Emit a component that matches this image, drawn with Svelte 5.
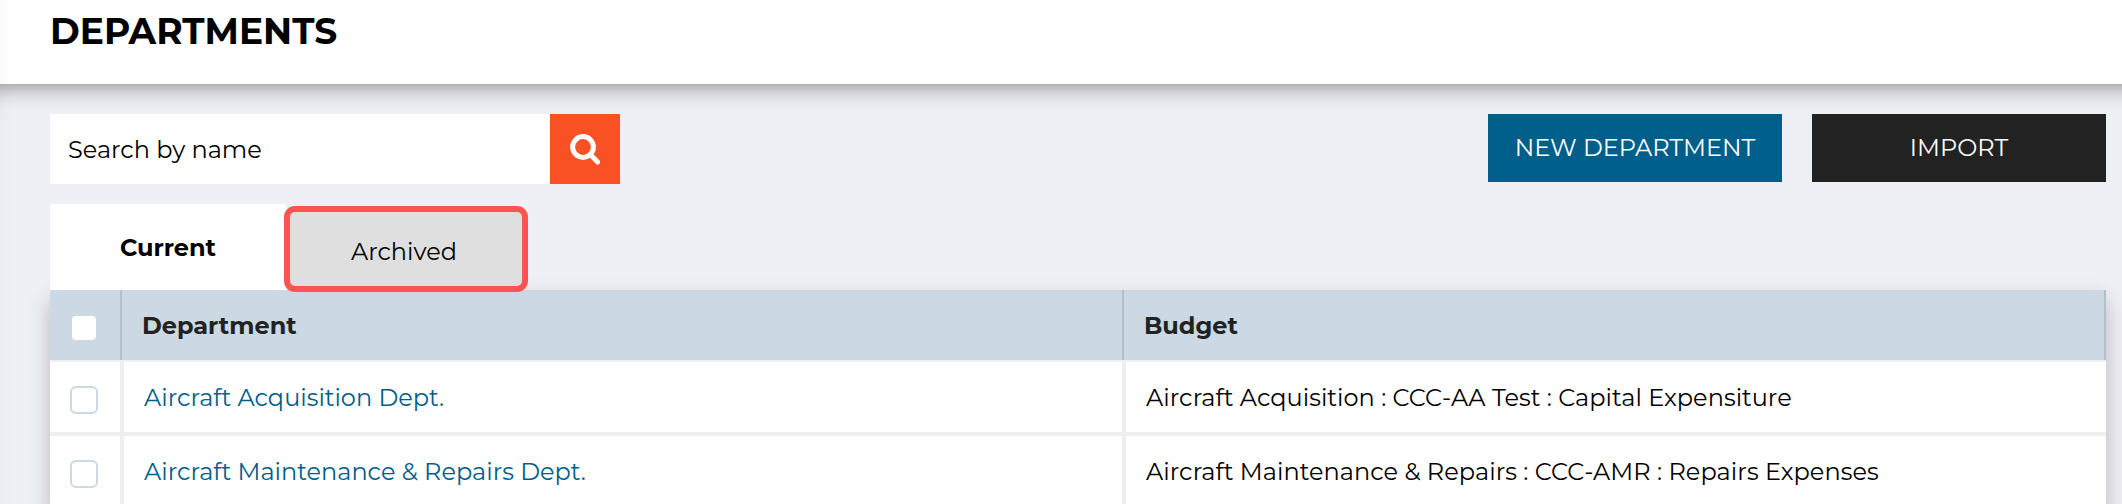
<script lang="ts">
	interface Department {
		name: string;
		budget: string;
	}

	const departments: Department[] = [
		{
			name: 'Aircraft Acquisition Dept.',
			budget: 'Aircraft Acquisition : CCC-AA Test : Capital Expensiture'
		},
		{
			name: 'Aircraft Maintenance & Repairs Dept.',
			budget: 'Aircraft Maintenance & Repairs : CCC-AMR : Repairs Expenses'
		}
	];

	let search = $state('');
	let tab = $state('current');
	let selected = $state(departments.map(() => false));
	let allSelected = $derived(selected.every(Boolean));

	function toggleAll() {
		const next = !allSelected;
		selected = selected.map(() => next);
	}
</script>

<div class="page">
	<header>
		<h1>DEPARTMENTS</h1>
	</header>

	<main>
		<div class="toolbar">
			<form class="search" onsubmit={(e) => e.preventDefault()}>
				<input type="text" placeholder="Search by name" bind:value={search} />
				<button type="submit" aria-label="Search">
					<svg viewBox="0 0 30 31" width="30" height="31">
						<circle cx="13" cy="13" r="10.4" />
						<path d="M20.5 20.8 L27.6 28" />
					</svg>
				</button>
			</form>
			<div class="actions">
				<button type="button" class="btn btn-new">NEW DEPARTMENT</button>
				<button type="button" class="btn btn-import">IMPORT</button>
			</div>
		</div>

		<div class="tabs">
			<button type="button" class="tab" class:active={tab === 'current'} onclick={() => (tab = 'current')}>
				Current
			</button>
			<button type="button" class="tab archived" class:active={tab === 'archived'} onclick={() => (tab = 'archived')}>
				Archived
			</button>
		</div>

		<div class="table">
			<div class="row head">
				<div class="cell check">
					<input type="checkbox" aria-label="Select all" checked={allSelected} onchange={toggleAll} />
				</div>
				<div class="cell">Department</div>
				<div class="cell">Budget</div>
			</div>
			{#each departments as department, i (department.name)}
				<div class="row">
					<div class="cell check">
						<input type="checkbox" aria-label="Select {department.name}" bind:checked={selected[i]} />
					</div>
					<div class="cell"><a href="#department-{i}">{department.name}</a></div>
					<div class="cell budget">{department.budget}</div>
				</div>
			{/each}
		</div>
	</main>
</div>

<style>
	:global(body) {
		overflow: hidden;
	}

	.page {
		position: relative;
		height: 504px;
		overflow: hidden;
		background: #eff0f6;
		color: #000;
		font-family: Montserrat, 'Open Sans', sans-serif;
		font-size: 24px;
		line-height: 30px;
	}

	/* faint shade cast by the side menu */
	.page::before {
		content: '';
		position: absolute;
		top: -20px;
		bottom: -20px;
		left: -10px;
		width: 10px;
		box-shadow: 0 0 14px rgba(40, 20, 20, 0.05);
		z-index: 1;
	}

	header {
		height: 84px;
		box-sizing: border-box;
		margin: 0 -30px;
		padding: 9px 80px 0;
		background: #fff;
		box-shadow: 0 0 24px rgba(0, 0, 0, 0.5);
	}

	h1 {
		margin: 0;
		font-size: 36px;
		font-weight: 700;
		line-height: 44px;
	}

	main {
		padding: 30px 16px 0 50px;
	}

	button,
	input {
		font: inherit;
		border: none;
		border-radius: 0;
		margin: 0;
		padding: 0;
	}

	.toolbar {
		display: flex;
		justify-content: space-between;
		align-items: flex-start;
	}

	.search {
		display: flex;
		height: 70px;
	}

	.search input {
		width: 500px;
		box-sizing: border-box;
		padding: 2px 18px 0;
		background: #fff;
		outline: none;
	}

	.search input::placeholder {
		color: #000;
		opacity: 1;
	}

	.search button {
		display: flex;
		align-items: center;
		justify-content: center;
		width: 70px;
		background: #f95123;
	}

	.search svg {
		fill: none;
		stroke: #fff;
		stroke-width: 5;
		stroke-linecap: round;
	}

	.actions {
		display: flex;
		gap: 30px;
	}

	.btn {
		width: 294px;
		height: 68px;
		color: #fff;
	}

	.btn-new {
		background: #005e8a;
	}

	.btn-import {
		background: #222;
	}

	.tabs {
		display: flex;
		position: relative;
		z-index: 1;
		height: 86px;
		margin-top: 20px;
	}

	.tab {
		width: 236px;
		padding-top: 2px;
		background: #dfdfdf;
		color: #000;
	}

	.tab.active {
		background: #fff;
		font-weight: 700;
	}

	.tab.archived {
		box-sizing: border-box;
		width: 244px;
		height: 86px;
		margin: 2px 0 0 -2px;
		padding: 6px 4px 0 0;
		border: 6px solid #fc5450;
		border-radius: 11px;
	}

	.table {
		background: #fff;
		box-shadow: 0 10px 20px rgba(40, 10, 20, 0.25);
	}

	.row {
		display: grid;
		grid-template-columns: 72px 1002px 1fr;
		height: 74px;
	}

	.cell {
		display: flex;
		align-items: center;
		box-sizing: border-box;
		padding: 2px 0 0 20px;
		border: 2px solid #efefef;
	}

	.cell:first-child {
		border-left: none;
	}

	.cell:last-child {
		border-right: none;
	}

	.cell.check {
		justify-content: center;
		padding: 6px 0 0 0;
	}

	.budget {
		letter-spacing: 0.035px;
	}

	.head {
		height: 70px;
		background: #ccd8e3;
		color: #222;
		font-weight: 700;
	}

	.head .cell,
	.head .cell:last-child {
		border: none;
		border-right: 2px solid #b1c0ca;
	}

	a {
		color: #005e8a;
		text-decoration: none;
	}

	input[type='checkbox'] {
		appearance: none;
		box-sizing: border-box;
		width: 28px;
		height: 28px;
		margin-right: 2px;
		border: 2px solid #ccd8e3;
		border-radius: 6px;
		background: #fff;
	}

	input[type='checkbox']:checked {
		background: #005e8a;
	}
</style>
